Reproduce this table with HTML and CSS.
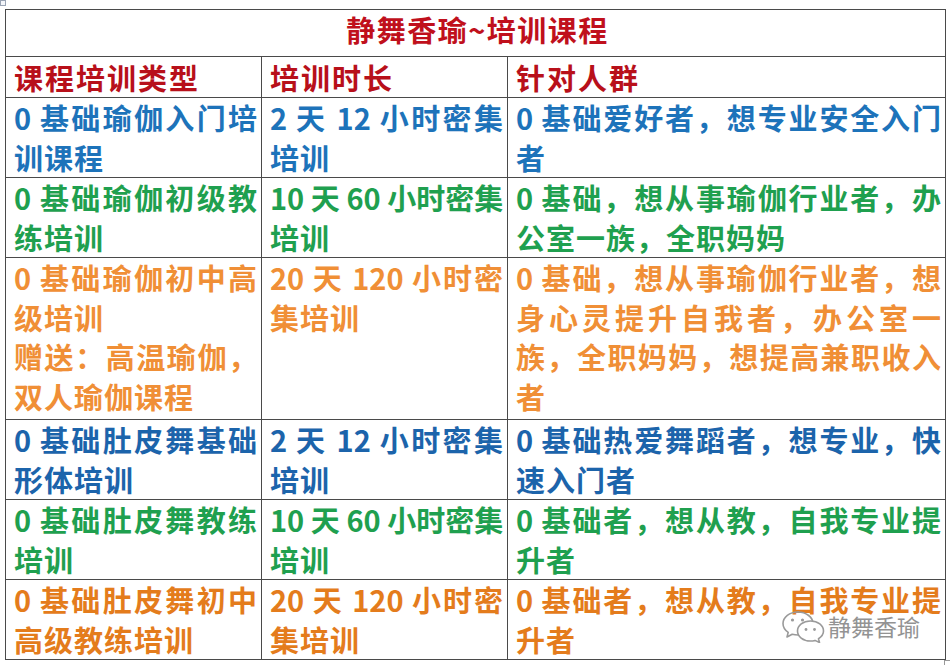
FILE: index.html
```html
<!DOCTYPE html>
<html lang="zh">
<head>
<meta charset="utf-8">
<link rel="stylesheet" href="styles.css">
</head>
<body>
<div class="page">
  <span class="handle-move"></span>
  <table class="course">
    <colgroup><col class="c1"><col class="c2"><col class="c3"></colgroup>
    <tr class="title"><th colspan="3">静舞香瑜~培训课程</th></tr>
    <tr class="head"><th>课程培训类型</th><th>培训时长</th><th>针对人群</th></tr>
    <tr class="r2 blue">
      <td><span class="ln full">0 基础瑜伽入门培</span><span class="ln">训课程</span></td>
      <td><span class="ln full">2 天 12 小时密集</span><span class="ln">培训</span></td>
      <td><span class="ln full">0 基础爱好者，想专业安全入门</span><span class="ln">者</span></td>
    </tr>
    <tr class="r2 green">
      <td><span class="ln full">0 基础瑜伽初级教</span><span class="ln">练培训</span></td>
      <td><span class="ln full">10 天 60 小时密集</span><span class="ln">培训</span></td>
      <td><span class="ln full">0 基础，想从事瑜伽行业者，办</span><span class="ln">公室一族，全职妈妈</span></td>
    </tr>
    <tr class="r4 orange">
      <td><span class="ln full">0 基础瑜伽初中高</span><span class="ln">级培训</span><span class="ln full">赠送：高温瑜伽，</span><span class="ln">双人瑜伽课程</span></td>
      <td><span class="ln full">20 天 120 小时密</span><span class="ln">集培训</span></td>
      <td><span class="ln full">0 基础，想从事瑜伽行业者，想</span><span class="ln full">身心灵提升自我者，办公室一</span><span class="ln full">族，全职妈妈，想提高兼职收入</span><span class="ln">者</span></td>
    </tr>
    <tr class="r2 blue2">
      <td><span class="ln full">0 基础肚皮舞基础</span><span class="ln">形体培训</span></td>
      <td><span class="ln full">2 天 12 小时密集</span><span class="ln">培训</span></td>
      <td><span class="ln full">0 基础热爱舞蹈者，想专业，快</span><span class="ln">速入门者</span></td>
    </tr>
    <tr class="r2 green">
      <td><span class="ln full">0 基础肚皮舞教练</span><span class="ln">培训</span></td>
      <td><span class="ln full">10 天 60 小时密集</span><span class="ln">培训</span></td>
      <td><span class="ln full">0 基础者，想从教，自我专业提</span><span class="ln">升者</span></td>
    </tr>
    <tr class="r2 last orange2">
      <td><span class="ln full">0 基础肚皮舞初中</span><span class="ln">高级教练培训</span></td>
      <td><span class="ln full">20 天 120 小时密</span><span class="ln">集培训</span></td>
      <td><span class="ln full">0 基础者，想从教，自我专业提</span><span class="ln">升者</span></td>
    </tr>
  </table>
  <div class="watermark">
    <svg class="wx" width="46" height="34" viewBox="0 0 46 34">
      <path d="M17 3C8.5 3 2 8.3 2 14.6c0 3.6 2 6.7 5.2 8.8L6 28l5.2-2.8c1.8.5 3.7.8 5.8.8" fill="none" stroke="#9a9a9a" stroke-width="1.6" stroke-linecap="round" stroke-linejoin="round"/>
      <path d="M17 3c8 0 14.5 5 15 11" fill="none" stroke="#9a9a9a" stroke-width="1.6" stroke-linecap="round"/>
      <circle cx="11.5" cy="11" r="1.6" fill="#9a9a9a"/>
      <circle cx="21.5" cy="11" r="1.6" fill="#9a9a9a"/>
      <path d="M29.5 14C22 14 16.5 18.6 16.5 24s5.5 10 13 10c1.6 0 3.1-.2 4.5-.6L38.5 35.5l-1-3.8c3-1.9 5-4.6 5-7.7C42.5 18.6 37 14 29.5 14z" fill="#fff" stroke="#9a9a9a" stroke-width="1.6" stroke-linejoin="round" transform="translate(0,-2)"/>
      <circle cx="25" cy="20.5" r="1.4" fill="#9a9a9a"/>
      <circle cx="33.5" cy="20.5" r="1.4" fill="#9a9a9a"/>
    </svg>
    <span class="wm-text">静舞香瑜</span>
  </div>
  <span class="handle-size"></span>
</div>
</body>
</html>
```

FILE: styles.css
```css
html, body {
  margin: 0;
  padding: 0;
  background: #ffffff;
}

.page {
  position: relative;
  width: 950px;
  height: 665px;
  overflow: hidden;
  padding: 9px 0 0 5px;
  box-sizing: border-box;
}

.course {
  border-collapse: collapse;
  table-layout: fixed;
  width: 940px;
  font-family: "Noto Sans CJK SC", "Noto Sans", sans-serif;
  font-weight: 700;
  font-size: 29px;
}

.c1 { width: 256px; }
.c2 { width: 246px; }
.c3 { width: 438px; }

.course th,
.course td {
  border: 1.5px solid #4a4a4a;
  padding: 0 4px 0 8px;
  vertical-align: top;
  text-align: left;
  line-height: 39.5px;
  white-space: nowrap;
}

.title th {
  height: 46px;
  line-height: 36px;
  text-align: center;
  color: #c0101c;
  letter-spacing: 1.5px;
  padding-top: 1px;
  padding-bottom: 9px;
  box-sizing: border-box;
}

.head th {
  height: 41px;
  line-height: 40px;
  color: #b8101a;
  letter-spacing: 2px;
  box-sizing: border-box;
}

.r2 td { height: 79px; }
.r4 td { height: 161px; }

.ln {
  display: block;
  text-align: left;
  letter-spacing: 1px;
}

.ln.full {
  text-align: justify;
  text-align-last: justify;
  letter-spacing: 0;
}

.blue { color: #1d73ba; }
.blue2 { color: #1c64ab; }
.green { color: #1fa04f; }
.orange { color: #f08f36; }
.orange2 { color: #e47c1c; }

.watermark {
  position: absolute;
  left: 781px;
  top: 609px;
  display: flex;
  align-items: center;
  gap: 1px;
}

.wm-text {
  font-family: "Noto Sans CJK SC", sans-serif;
  font-weight: 400;
  font-size: 23px;
  line-height: 30px;
  color: #939393;
  letter-spacing: 0;
  text-shadow: 0 0 1px #ffffff;
}

.handle-move {
  position: absolute;
  left: 0;
  top: 0;
  width: 6px;
  height: 6px;
  border: 1px solid #9aa4b4;
  background: #f4f6fa;
  box-sizing: border-box;
}

.handle-size {
  position: absolute;
  left: 944px;
  top: 660px;
  width: 7px;
  height: 7px;
  border: 1px solid #999;
  background: #fff;
  box-sizing: border-box;
}
```
